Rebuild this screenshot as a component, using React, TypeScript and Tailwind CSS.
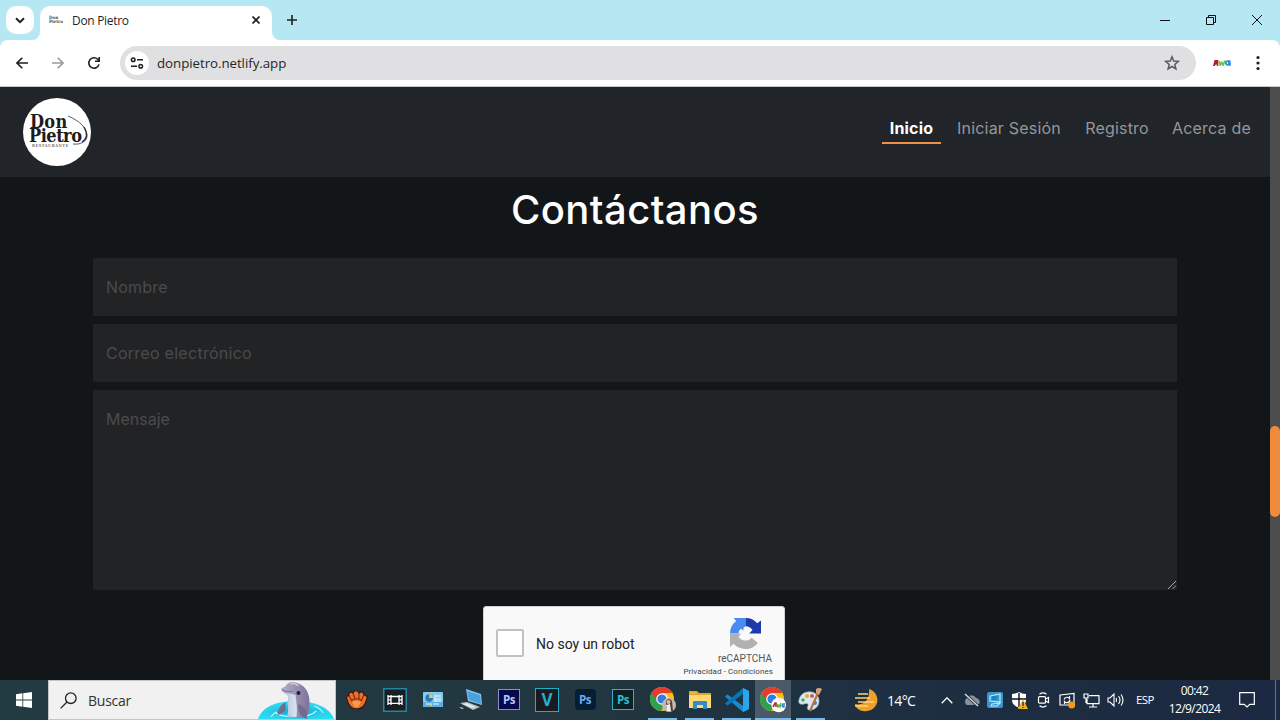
import type { ReactNode } from 'react';

const SEGOE = "font-['Open_Sans','Noto_Sans',sans-serif]";
const WORK = "font-['Inter',sans-serif]";

function TabStrip() {
  return (
    <div className="flex h-10 shrink-0 bg-[#b6e8f3]">
      <div className="flex w-10 justify-center pt-1.5">
        <div className="flex h-7 w-7 items-center justify-center rounded-[10px] bg-white">
          <svg width="10" height="7" viewBox="0 0 10 7" fill="none" stroke="#1f1f1f" strokeWidth="2"><path d="M1 1.2 5 5.2 9 1.2" /></svg>
        </div>
      </div>
      <div className="relative mt-1.5 flex h-[34px] w-[232px] items-center rounded-t-[10px] bg-white pb-1.5">
        <svg className="absolute -left-2 bottom-0" width="8" height="8"><path d="M8 0A8 8 0 0 1 0 8H8Z" fill="#fff" /></svg>
        <svg className="absolute -right-2 bottom-0" width="8" height="8"><path d="M0 0A8 8 0 0 0 8 8H0Z" fill="#fff" /></svg>
        <div className="ml-[9px] w-[14px] font-['DejaVu_Serif_Condensed','DejaVu_Serif',serif] text-[4.5px] leading-[4px] font-bold text-[#444]">
          <div>Don</div>
          <div>Pietro</div>
        </div>
        <span className={`mt-[2px] ml-[9px] text-[12px] tracking-[-0.3px] text-[#1f1f1f] ${SEGOE}`}>Don Pietro</span>
        <svg className="mr-3 ml-auto" width="8" height="8" viewBox="0 0 8 8" stroke="#1f1f1f" strokeWidth="1.6"><path d="M.5.5l7 7M7.5.5l-7 7" /></svg>
      </div>
      <div className="flex w-10 items-center justify-center">
        <svg width="10" height="10" viewBox="0 0 10 10" stroke="#1f1f1f" strokeWidth="1.6"><path d="M5 0v10M0 5h10" /></svg>
      </div>
      <div className="ml-auto flex items-center">
        <div className="flex w-[46px] justify-center"><svg width="10" height="10"><path d="M0 5.5h10" stroke="#111" /></svg></div>
        <div className="flex w-[46px] justify-center"><svg width="10" height="10" fill="none" stroke="#111"><path d="M.5 2.5h7v7h-7zM2.5 2.5v-2h7v7h-2" /></svg></div>
        <div className="flex w-[46px] justify-center"><svg width="10" height="10" stroke="#111"><path d="M0 0l10 10M10 0L0 10" /></svg></div>
      </div>
    </div>
  );
}

function Toolbar() {
  return (
    <div className="h-[47px] shrink-0 bg-[#b6e8f3]">
      <div className="flex h-[47px] items-center rounded-t-lg border-b border-[#c9c9c9] bg-white">
        <svg className="ml-4" width="12" height="12" viewBox="0 0 12 12" fill="none" stroke="#1f1f1f" strokeWidth="1.6"><path d="M12 6H1M6.3.7 1 6l5.3 5.3" /></svg>
        <svg className="ml-6" width="12" height="12" viewBox="0 0 12 12" fill="none" stroke="#9b9b9b" strokeWidth="1.6"><path d="M0 6h11M5.7.7 11 6l-5.3 5.3" /></svg>
        <svg className="ml-[23px]" width="14" height="14" viewBox="0 0 14 14" fill="none" stroke="#1f1f1f" strokeWidth="1.6"><path d="M12 8.4A5.2 5.2 0 1 1 10.7 3.3L12.2 4.8" /><path d="M12.2 1v4.2H8" /></svg>
        <div className="ml-[19px] flex h-[34px] w-[1076px] items-center rounded-full bg-[#e0e0e2] pl-[5px]">
          <div className="flex h-6 w-6 items-center justify-center rounded-full bg-white">
            <svg width="14" height="12" viewBox="0 0 14 12" fill="none" stroke="#1f1f1f" strokeWidth="1.5"><circle cx="3.2" cy="2.7" r="1.8" /><path d="M7 2.7h6M1 9.2h6" /><circle cx="10.7" cy="9.2" r="1.8" /></svg>
          </div>
          <span className={`mt-[2px] ml-2 text-[13.3px] tracking-[-0.05px] text-[#262626] ${SEGOE}`}>donpietro.netlify.app</span>
          <svg className="mr-4 ml-auto" width="16" height="16" viewBox="0 0 16 16" fill="none" stroke="#5c5c5f" strokeWidth="1.5"><path d="M8 1.8 9.7 6l4.6.4-3.5 3 1.1 4.5L8 11.5l-3.9 2.4 1.1-4.5-3.5-3L6.3 6Z" /></svg>
        </div>
        <svg className="ml-[17px]" width="18" height="6" viewBox="0 0 18 6"><path d="M0 6 1.5 0h3.8v6H3.8V4.6H2.6L2 6Z" fill="#b41f26" /><path d="M6 1 7.3 5 8.8 2.5 10.2 5 12 .5" stroke="#62c94c" strokeWidth="1.8" fill="none" /><path d="M17.5 1.2h-2.8a1.8 1.8 0 0 0 0 3.6h2.2V3H15" stroke="#3989e3" strokeWidth="1.8" fill="none" /></svg>
        <svg className="ml-[25px]" width="4" height="16" fill="#1f1f1f"><circle cx="2" cy="2.5" r="1.6" /><circle cx="2" cy="8" r="1.6" /><circle cx="2" cy="13.5" r="1.6" /></svg>
      </div>
    </div>
  );
}

function Logo() {
  return (
    <div className="relative h-[68px] w-[68px] rounded-full bg-white font-['DejaVu_Serif_Condensed','DejaVu_Serif',serif] font-bold text-[#1c1c1c]">
      <div className="pt-[17px] pl-[7px] text-[18px] leading-[14px] tracking-[0.3px]">Don</div>
      <div className="pl-[6px] text-[18px] leading-[14px] tracking-[-0.5px]">Pietro</div>
      <div className="pt-[1px] pl-[9px] text-[4px] leading-[4px] tracking-[0.5px] text-[#777]">RESTAURANTE</div>
      <svg className="absolute top-0 left-0" width="68" height="68" fill="none" stroke="#333"><path d="M45 18C57 23 64 30 64 38C64 43 58 47 50 46" strokeWidth=".8" /><path d="M61 29C65 36 64 41 59 44" strokeWidth="1.4" /></svg>
    </div>
  );
}

function Header() {
  return (
    <header className={`flex h-[90px] shrink-0 items-start bg-[#212529] pt-[11px] pl-[23px] text-[16px] leading-6 tracking-[0.2px] text-[#95979a] ${WORK}`}>
      <Logo />
      <nav className="mt-[18px] mr-3 ml-auto flex gap-2">
        <div className="flex h-7 w-[59px] justify-center border-b-2 border-[#ee9148] font-bold text-white">Inicio</div>
        <div className="flex w-[120px] justify-center whitespace-nowrap">Iniciar Sesión</div>
        <div className="flex w-[80px] justify-center">Registro</div>
        <div className="flex w-[93px] justify-center whitespace-nowrap">Acerca de</div>
      </nav>
    </header>
  );
}

function Captcha() {
  return (
    <div className="mt-4 mr-[2px] flex h-[78px] w-[302px] shrink-0 self-center rounded-[3px] border border-[#d3d3d3] bg-[#f9f9f9] font-['Roboto',sans-serif] text-black">
      <div className="mt-[22px] ml-3 h-7 w-7 rounded-[2px] border-2 border-[#c1c1c1] bg-white" />
      <div className="mt-[29px] ml-3 text-[14px] leading-[17px] text-[#222]">No soy un robot</div>
      <div className="mr-[11px] ml-auto flex flex-col items-end text-[#555]">
        <svg className="mt-[11px] mr-[12px]" width="31" height="31" viewBox="0 0 30 30">
          <path d="M15 0H3.5L6 3C2 6 0 10 0 15h8.4c-.2-2 .5-3.5 2.6-4.6l2 2V9.6L15 8Z" fill="#4a8bf0" />
          <path d="M15 0c5 0 8.5 1.800 11.300 5.200L30 2.300V15H18.500l3.300-3.300C20.400 9.500 18 8 15 8Z" fill="#1c3aa9" />
          <path d="M0 15h10.500L8.300 18.500c3 4.300 8.700 4.300 12.700.500l6 5.200C23.500 28.500 20 30 15 30c-5 0-8.500-1.700-11.500-5L0 28Z" fill="#b1b1b1" />
        </svg>
        <div className="mt-[3px] mr-[1px] text-[10px] leading-[13px]">reCAPTCHA</div>
        <div className="pt-[1px] text-[8px] leading-[12px] tracking-[0.08px] whitespace-nowrap text-[#444]">Privacidad - Condiciones</div>
      </div>
    </div>
  );
}

function Page() {
  const field = 'shrink-0 bg-[#222325] px-[13px] pt-[17px] text-[16px] leading-6 text-[#4a4b4d]';
  return (
    <div className="flex h-[593px] shrink-0">
      <div className="flex w-[1270px] flex-col overflow-hidden bg-[#121619]">
        <Header />
        <main className={`flex min-h-0 flex-1 flex-col px-[93px] ${WORK}`}>
          <h1 className="mt-[9px] text-center text-[40px] leading-[48px] font-medium tracking-[0.4px] text-white">Contáctanos</h1>
          <div className={`mt-6 h-[58px] tracking-[0.2px] ${field}`}>Nombre</div>
          <div className={`mt-2 h-[58px] tracking-[0.27px] ${field}`}>Correo electrónico</div>
          <div className={`relative mt-2 h-[200px] ${field}`}>
            Mensaje
            <svg className="absolute right-[1px] bottom-[1px]" width="8" height="8" stroke="#aaa"><path d="M0 8 8 0M4.500 8 8 4.500" /></svg>
          </div>
          <Captcha />
        </main>
      </div>
      <div className="w-[10px] bg-[#4d4d4d] pt-[339px]">
        <div className="h-[91px] rounded-[5px] bg-[#ef8b3b]" />
      </div>
    </div>
  );
}

function AppCell({ children, w = 'w-[38px]', running = false, active = false }: { children: ReactNode; w?: string; running?: boolean; active?: boolean }) {
  return (
    <div className={`flex h-10 flex-col items-center ${w} ${active ? 'bg-[#4b5a69]' : ''}`}>
      <div className="flex h-[38px] items-center justify-center pt-[1px]">{children}</div>
      {running && <div className={`h-[2px] bg-[#76b9ed] ${active ? 'w-full' : 'w-[29px]'}`} />}
    </div>
  );
}

function Chrome({ children }: { children: ReactNode }) {
  return (
    <svg width="26" height="26" viewBox="0 0 26 26">
      <circle cx="12" cy="12" r="12" fill="#fbc116" />
      <path d="M12 12 1.6 6A12 12 0 0 0 11 24L17 15Z" fill="#2ba24c" />
      <path d="M1.6 6a12 12 0 0 1 20.8 0H12v6L7 14Z" fill="#e33b2e" />
      <circle cx="12" cy="12" r="5.8" fill="#fff" />
      <circle cx="12" cy="12" r="4.6" fill="#2f7de1" />
      {children}
    </svg>
  );
}

function Adobe({ box, children }: { box: string; children: string }) {
  return <div className={`flex items-center justify-center font-['Open_Sans',sans-serif] font-bold ${box}`}>{children}</div>;
}

function Dolphin() {
  return (
    <svg className="mt-auto ml-auto" width="77" height="38" viewBox="0 0 78 38" preserveAspectRatio="none">
      <defs>
        <linearGradient id="dol" x1="0" x2="1"><stop offset="0" stopColor="#b6afc9" /><stop offset="1" stopColor="#7d7299" /></linearGradient>
        <linearGradient id="belly" x1="0" x2="1"><stop offset="0" stopColor="#a8c4d8" /><stop offset="1" stopColor="#dce4ef" /></linearGradient>
        <radialGradient id="pool" cx=".5" cy=".6" r=".6"><stop offset="0" stopColor="#129fc6" /><stop offset=".6" stopColor="#2bd0ea" /><stop offset="1" stopColor="#26e3f5" /></radialGradient>
      </defs>
      <path d="M0 38C4 26 18 20 38 20s35 7 39 18Z" fill="url(#pool)" />
      <path d="M17 31c6 6 35 7 42-1M13 36q3-4 6-5M57 25q6 2 9 7" fill="none" stroke="#bdf5fb" strokeWidth="1.2" />
      <path d="M28 5C30 1 35 0 40 2c9 3 13 12 12 21 0 6-1 10-3 13-7 2-14 1-19-1 1-8 0-14 1-20l-7-5c-1-3 1-3 4-5Z" fill="url(#dol)" />
      <path d="M24 10c4 3 10 2 14 4 1 7 2 15 1 22-4 0-6 0-9-2 1-7 0-13 1-19l-7-5Z" fill="url(#belly)" />
      <path d="M24 8c3 3 7 3 11 2" fill="none" stroke="#776d91" />
      <path d="M28 21c-5 3-8 7-8 13 4-1 7-3 8-6ZM41 23c-1 7 1 12 8 15 3-7-2-13-8-15Z" fill="#746b91" />
      <circle cx="41" cy="12" r="2" fill="#20203a" />
      <path d="M33 3q4-2 8 2" fill="none" stroke="#d6cee4" strokeWidth="1.5" />
    </svg>
  );
}

function TrayCell({ children }: { children: ReactNode }) {
  return <div className="flex w-6 items-center justify-center">{children}</div>;
}

function Taskbar() {
  return (
    <div className={`flex h-10 shrink-0 bg-[linear-gradient(90deg,#233b43_0%,#22373f_45%,#1e3041_65%,#1c2942_100%)] text-white ${SEGOE}`}>
      <div className="flex w-12 items-center justify-center">
        <svg width="16" height="16" viewBox="0 0 16 16" fill="#fff"><path d="M0 2.2 6.4 1.3v6.3H0ZM7.2 1.2 16 0v7.6H7.2ZM0 8.4h6.4v6.3L0 13.8ZM7.2 8.4H16V16l-8.8-1.2Z" /></svg>
      </div>
      <div className="flex w-[288px] items-center border border-[#c4c5c6] bg-[#f1f1f1]">
        <svg className="ml-[11px]" width="17" height="17" viewBox="0 0 17 17" fill="none" stroke="#222" strokeWidth="1.3"><circle cx="10.8" cy="6.2" r="5.3" /><path d="M7 10 .6 16.4" /></svg>
        <span className="ml-[11px] text-[14px] tracking-[-0.25px] text-[#333]">Buscar</span>
        <Dolphin />
      </div>
      <div className="ml-[2px] flex">
        <AppCell>
          <svg width="22" height="20" viewBox="0 0 22 20" fill="#e9712b" stroke="#35130b" strokeWidth="1.100"><path d="M1 9C0 7 1 5 3 6 2 3 5 1 7 3c1-3 5-3 6 0 2-2 5-1 5 2 3 0 4 3 2 6-1 4-4 8-9 8-6 0-9-5-10-10Z" /><path d="m3 6 3 5M7 3l2 6M13 3v6m5-4-3 6M5 11c3-3 8-3 11 0" fill="none" stroke="#7e2a10" /><path d="M6 12q5-2 9 0l-3 5H9Z" fill="#f7a055" stroke="none" /></svg>
        </AppCell>
        <AppCell>
          <svg width="24" height="24" viewBox="0 0 24 24"><path d="M.75.75h22.500v22.500H.75Z" fill="#191c20" stroke="#27849f" strokeWidth="1.500" /><path d="M5 7v10M8 7v10M16 7v10M19 7v10M5 8.500h3M5 11.900h3M5 15.300h3M16 8.500h3M16 11.900h3M16 15.300h3M8 8.500h8M8 15.300h8" stroke="#fff" strokeWidth="1.300" /></svg>
        </AppCell>
        <AppCell>
          <svg width="20" height="16" viewBox="0 0 20 16"><rect width="20" height="15" rx="1" fill="#83caf0" /><path d="M0 10h20v5H0Z" fill="#60aee0" /><circle cx="6.2" cy="6" r="3.8" fill="#2879b9" /><path d="M6.2 6V2.2A3.8 3.8 0 0 1 10 6Z" fill="#efc85b" /><path d="M12 4h6M12 7h6M12 9h6M3 12h4M10 12h6M12 3v7" stroke="#e7f7ff" /><path d="M8 11v3" stroke="#efc85b" strokeWidth="2" /></svg>
        </AppCell>
        <AppCell>
          <svg width="24" height="22" viewBox="0 0 24 22"><path d="m7 0 15 5 1 11L9 12Z" fill="#8cc5ea" /><path d="m8 2 13 4 1 9-12-4Z" fill="#49a2df" /><path d="m1 14 7-1 13 5-7 3Z" fill="#b9c1c5" /><path d="m3 15 5-1 9 4-4 1Z" fill="#e2e7e8" /><path d="m0 18 5 1-2 1Z" fill="#ddd" /></svg>
        </AppCell>
        <AppCell><Adobe box="h-[21px] w-[22px] border-[1.5px] border-[#858fc8] bg-[#08084d] text-[11.5px] tracking-[-0.4px] text-[#b6c5ff]">Ps</Adobe></AppCell>
        <AppCell><Adobe box="h-6 w-6 border-[1.5px] border-[#27a9c8] bg-[#181b20] text-[17px] text-[#28acd1]">V</Adobe></AppCell>
        <AppCell><Adobe box="h-[21px] w-[21px] rounded-[4px] bg-[#061d36] text-[11.5px] tracking-[-0.4px] text-[#64adf0]">Ps</Adobe></AppCell>
        <AppCell><Adobe box="h-[21px] w-[22px] border-[1.5px] border-[#2eb2cb] bg-[#0d2024] text-[11.5px] tracking-[-0.4px] text-[#31bdd3]">Ps</Adobe></AppCell>
      </div>
      <div className="ml-[2px] flex">
        <AppCell w="w-[37px]" running>
          <Chrome><circle cx="19" cy="18" r="7" fill="#c7b8ad" /><path d="M16 14q3-4 6 0l1 10h-3l-1-5-3 3Z" fill="#553f3b" /><circle cx="18.5" cy="15" r="2" fill="#e5b9a5" /><path d="m16 18 4-1 1 7h-4Z" fill="#f5eeee" /></Chrome>
        </AppCell>
        <AppCell w="w-[37px]" running>
          <svg width="22" height="20" viewBox="0 0 22 20"><path d="M0 1h8l2 2h12v15H0Z" fill="#dca72b" /><path d="M0 5h22v13H0Z" fill="#fed875" /><path d="M4 19v-7q0-1 1-1h12q1 0 1 1v7h-4v-4H8v4Z" fill="#398ac0" /><path d="M1 3h6" stroke="#f5c64d" /></svg>
        </AppCell>
        <AppCell w="w-[37px]" running>
          <svg width="24" height="24" viewBox="0 0 24 24"><path d="m18 0 6 3v18l-6 3L0 8.500 2.500 6.500 18 18Z" fill="#168ad2" /><path d="M18 0 0 15.500l2.500 2L18 6Z" fill="#0875b9" /><path d="m18 0 6 3v18l-6 3Z" fill="#2ba5ec" /></svg>
        </AppCell>
        <AppCell w="w-[36px]" running active>
          <Chrome><circle cx="18.7" cy="18" r="7.3" fill="#fff" /><path d="m13 20 2-4h1v4" fill="none" stroke="#c42a34" strokeWidth="1.7" /><path d="m17 17 1 3 1-2 1 2 1-4" fill="none" stroke="#45b943" strokeWidth="1.4" /><path d="M25 17h-2q-2 3 1 3v-2" fill="none" stroke="#317ed5" strokeWidth="1.4" /></Chrome>
        </AppCell>
        <AppCell w="w-[38px]" running>
          <svg width="24" height="24" viewBox="0 0 24 24"><path d="M10 4c6-1 11 3 11 9s-5 9-9 9c-3 0-3-2-2-4 1-3-2-3-4-2-4 1-6-1-5-4 1-5 5-8 9-8Z" fill="#d9e8f1" stroke="#9bb5c6" strokeWidth=".7" /><circle cx="5" cy="12" r="1.8" fill="#58a653" /><circle cx="9" cy="8" r="2" fill="#e7a63d" /><circle cx="14" cy="8" r="2" fill="#d85945" /><circle cx="17" cy="15" r="2" fill="#3c87c9" /><path d="m20 5-8 18" stroke="#b97138" strokeWidth="2.2" /><path d="M18 1q3-2 6 0l-3 6-3-2Z" fill="#d5a379" /></svg>
        </AppCell>
      </div>
      <div className="ml-[25px] flex w-[81px] items-center">
        <svg width="25" height="23" viewBox="0 0 25 23"><path d="M15 0c12 4 11 20-2 22C7 23 2 20 1 15c9 2 15-4 14-15Z" fill="#eda02a" /><path d="M4 5h10M1 9h15M4 13h16M1 17h13" stroke="#ffd27a" strokeWidth="1.7" /></svg>
        <span className="ml-2 text-[14px] tracking-[-0.65px]">14°C</span>
      </div>
      <div className="flex">
        <TrayCell><svg width="12" height="7" fill="none" stroke="#fff" strokeWidth="1.3"><path d="m.7 6.3 5.3-5.5 5.3 5.5" /></svg></TrayCell>
        <TrayCell><svg width="17" height="14" viewBox="0 0 17 14"><path d="M4 12a4 4 0 0 1 0-7 5 5 0 0 1 9 0c5 1 5 7 0 7Z" fill="#8a919b" /><path d="m2 1 13 12" stroke="#1e2e41" strokeWidth="3" /><path d="m2 1 13 12" stroke="#e5e7ea" strokeWidth="1.2" /></svg></TrayCell>
        <TrayCell><svg width="16" height="16" viewBox="0 0 16 16"><rect width="16" height="16" rx="2" fill="#3497ce" /><path d="M3 4l10-2v8L3 9ZM5 12l8-1-3 3H4Z" fill="none" stroke="#b9e9ff" strokeWidth="1.2" /><path d="M5 5h5M5 7h4" stroke="#136aa0" /></svg></TrayCell>
        <TrayCell><svg width="17" height="17" viewBox="0 0 17 17"><path d="M8 0q3 2 7 2v6c0 4-3 6-7 8-4-2-7-4-7-8V2q4 0 7-2Z" fill="#fff" /><path d="M8 1v14M1 7h14" stroke="#111" strokeWidth="1.4" /><path d="m12 7 5 10H7Z" fill="#f5b023" /><path d="M12 10v4m0 1v1" stroke="#222" strokeWidth="1.2" /></svg></TrayCell>
        <TrayCell><svg width="13" height="16" viewBox="0 0 13 16" fill="none" stroke="#fff" strokeWidth="1.2"><rect x="1.500" y="4.700" width="7" height="6.500" rx="1" /><path d="m8.500 7 3-1.500v5L8.500 9M2.500 2.200q3.500-2.500 7 0M2.500 13.800q3.500 2.500 7 0" /></svg></TrayCell>
        <TrayCell><svg width="17" height="17" viewBox="0 0 17 17" fill="none" stroke="#fff" strokeWidth="1.2"><path d="m1 3 14-1.500V13H1Z" /><path d="M5 7.500q1-3 4.500-2l1 1V4M11 8q-1 3.500-4.500 2.500l-1-1V12" /><circle cx="12.7" cy="13" r="3.5" fill="#f39a19" stroke="none" /></svg></TrayCell>
        <TrayCell><svg width="17" height="15" viewBox="0 0 17 15" fill="none" stroke="#fff" strokeWidth="1.2"><path d="M6 2.6h10v8H4V6M10 11v3M6 14h8M1 1h4v4H1ZM3 5v5" /></svg></TrayCell>
        <TrayCell><svg width="17" height="14" viewBox="0 0 17 14" fill="none" stroke="#fff" strokeWidth="1.1"><path d="M1 5h2l4-4v12L3 9H1ZM9 5q1 2 0 4M11.500 3q3 4 0 8M14 1.500q4 5.500 0 11" /></svg></TrayCell>
      </div>
      <div className="flex w-[36px] items-center justify-center text-[11.5px] tracking-[-0.6px]">ESP</div>
      <div className="flex w-[63px] flex-col items-center pt-[2px] text-[12px] leading-[18px] tracking-[-0.6px] whitespace-nowrap">
        <div>00:42</div>
        <div>12/9/2024</div>
      </div>
      <div className="flex w-[42px] items-center justify-center">
        <svg width="16" height="16" viewBox="0 0 16 16" fill="none" stroke="#fff" strokeWidth="1.2"><path d="M.7.7h14.6v11.6h-4.500L8 15l-2.800-2.700H.7Z" /></svg>
      </div>
      <div className="ml-[7px] w-px bg-[#687386]" />
    </div>
  );
}

export default function App() {
  return (
    <div className="flex h-[720px] w-[1280px] flex-col overflow-hidden bg-white">
      <TabStrip />
      <Toolbar />
      <Page />
      <Taskbar />
    </div>
  );
}
